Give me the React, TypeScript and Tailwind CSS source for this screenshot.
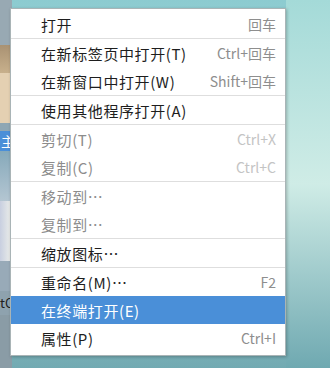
import React from 'react';

type Item = {
  label: string;
  shortcut?: string;
  disabled?: boolean;
  active?: boolean;
};

const sections: Item[][] = [
  [{ label: '打开', shortcut: '回车' }],
  [
    { label: '在新标签页中打开(T)', shortcut: 'Ctrl+回车' },
    { label: '在新窗口中打开(W)', shortcut: 'Shift+回车' },
  ],
  [{ label: '使用其他程序打开(A)' }],
  [
    { label: '剪切(T)', shortcut: 'Ctrl+X', disabled: true },
    { label: '复制(C)', shortcut: 'Ctrl+C', disabled: true },
  ],
  [
    { label: '移动到…', disabled: true },
    { label: '复制到…', disabled: true },
  ],
  [{ label: '缩放图标…' }],
  [
    { label: '重命名(M)…', shortcut: 'F2' },
    { label: '在终端打开(E)', active: true },
    { label: '属性(P)', shortcut: 'Ctrl+I' },
  ],
];

const font = { fontFamily: '"Noto Sans CJK SC", "Noto Sans", sans-serif' };

const MenuRow = ({ item }: { item: Item }) => {
  const labelColor = item.active
    ? 'text-white'
    : item.disabled
      ? 'text-[#8c8c8c]'
      : 'text-[#1e1e1e]';
  const keyColor = item.disabled ? 'text-[#c4c4c4]' : 'text-[#8e8e8e]';

  return (
    <div
      className={`flex h-[28px] items-center justify-between pl-[30px] pr-[9px] ${
        item.active ? 'bg-[#4a8fd8]' : ''
      }`}
    >
      <span className={`text-[15px] leading-none tracking-[0.6px] ${labelColor}`}>
        {item.label}
      </span>
      {item.shortcut && (
        <span className={`text-[14px] leading-none ${keyColor}`}>{item.shortcut}</span>
      )}
    </div>
  );
};

export default function App() {
  return (
    <div
      className="relative h-[368px] w-[330px] overflow-hidden bg-gradient-to-b from-[#8ccbd0] via-[#b4e0dc] to-[#72aab2]"
      style={font}
    >
      {/* desktop behind the menu */}
      <div className="absolute left-0 top-0 flex h-full w-[12px] flex-col">
        <div className="h-[45px] bg-[#98a9b3]" />
        <div className="h-[28px] bg-gradient-to-b from-[#a99273] to-[#c8b08c]" />
        <div className="h-[50px] bg-[#e4d0b2]" />
        <div className="h-[8px] bg-[#8fa7b4]" />
        <div className="flex h-[20px] items-center bg-[#4a8fd8] pl-[1px] text-[14px] leading-none text-white">
          主
        </div>
        <div className="h-[50px] bg-gradient-to-b from-[#86a9ba] to-[#b4c6d2]" />
        <div className="h-[60px] bg-gradient-to-r from-[#c8cfe0] to-[#eef0ea]" />
        <div className="h-[30px] bg-[#98aab8]" />
        <div className="h-[24px] bg-[#8ea2ae] text-[13px] leading-[24px] text-[#202020]">
          tC
        </div>
        <div className="flex-1 bg-[#8a9ca6]" />
      </div>
      <div className="absolute right-0 top-0 h-full w-[44px] bg-gradient-to-b from-[#a4dad8] via-[#cfece6] to-[#6fa9b1]" />

      {/* context menu */}
      <div className="absolute left-[10px] top-[8px] w-[276px] border border-[#a9b4b6] bg-white pb-[3px] pt-[1px] shadow-[1px_1px_3px_rgba(0,0,0,0.25)]">
        {sections.map((section, i) => (
          <div key={i} className={i > 0 ? 'border-t border-[#dedede]' : ''}>
            {section.map((item) => (
              <MenuRow key={item.label} item={item} />
            ))}
          </div>
        ))}
      </div>
    </div>
  );
}
